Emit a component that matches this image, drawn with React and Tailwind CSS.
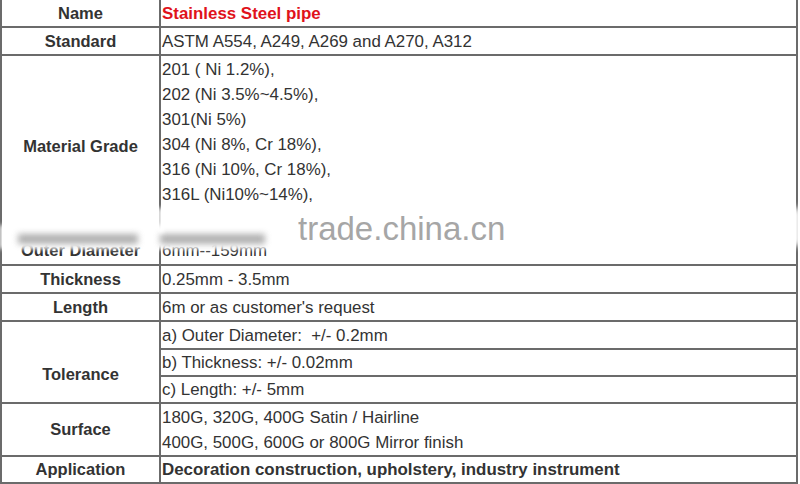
import React from "react";

const L = "flex items-center justify-center font-bold w-[159px] shrink-0 border-r-2 border-[#6b6b6b]";
const V = "flex-1 pl-[1px] text-[16.9px]";

function Row({ h, label, children, bold, red }) {
  return (
    <div className={`flex border-b-2 border-[#6b6b6b] ${h}`}>
      <div className={L}>{label}</div>
      <div className={`${V} flex items-center ${bold ? "font-bold" : ""} ${red ? "text-[#e0121b]" : ""}`}>{children}</div>
    </div>
  );
}

export default function App() {
  const grades = [
    "201 ( Ni 1.2%),",
    "202 (Ni 3.5%~4.5%),",
    "301(Ni 5%)",
    "304 (Ni 8%, Cr 18%),",
    "316 (Ni 10%, Cr 18%),",
    "316L (Ni10%~14%),",
  ];
  return (
    <div className="relative w-[800px] h-[484px] overflow-hidden bg-white text-[#333] text-[16.5px] leading-[25px] font-['Liberation_Sans',Arial,sans-serif]">
      <div className="w-[798px] border-l-2 border-r-2 border-[#6b6b6b]">
        <Row h="h-[28px]" label="Name" bold red>Stainless Steel pipe</Row>
        <Row h="h-[28px]" label="Standard">ASTM A554, A249, A269 and A270, A312</Row>
        <div className="flex border-b-2 border-[#6b6b6b] h-[210px]">
          <div className="w-[159px] shrink-0 border-r-2 border-[#6b6b6b] flex flex-col font-bold">
            <div className="h-[180px] flex items-center justify-center">Material Grade</div>
            <div className="flex-1 flex items-center justify-center">Outer Diameter</div>
          </div>
          <div className={`${V} flex flex-col`}>
            <div className="h-[180px] pt-[1px]">
              {grades.map((g) => (
                <div key={g}>{g}</div>
              ))}
            </div>
            <div className="flex-1 flex items-center">6mm--159mm</div>
          </div>
        </div>
        <Row h="h-[28px]" label="Thickness">0.25mm - 3.5mm</Row>
        <Row h="h-[28px]" label="Length">6m or as customer's request</Row>
        <div className="flex border-b-2 border-[#6b6b6b] h-[82px]">
          <div className={`${L} pt-[24px]`}>Tolerance</div>
          <div className="flex-1 flex flex-col text-[16.9px]">
            <div className="h-[28px] border-b-2 border-[#6b6b6b] flex items-center pl-[1px] whitespace-pre">a) Outer Diameter:  +/- 0.2mm</div>
            <div className="h-[27px] border-b-2 border-[#6b6b6b] flex items-center pl-[1px]">b) Thickness: +/- 0.02mm</div>
            <div className="flex-1 flex items-center pl-[1px]">c) Length: +/- 5mm</div>
          </div>
        </div>
        <div className="flex border-b-2 border-[#6b6b6b] h-[53px]">
          <div className={L}>Surface</div>
          <div className={`${V} pt-[1px]`}>
            <div>180G, 320G, 400G Satin / Hairline</div>
            <div>400G, 500G, 600G or 800G Mirror finish</div>
          </div>
        </div>
        <Row h="h-[27px]" label="Application" bold>Decoration construction, upholstery, industry instrument</Row>
      </div>

      {/* blurred band over outer diameter row */}
      <div className="absolute left-0 top-[225px] w-[300px] h-[24px] bg-white blur-[2px]"></div>
      <div className="absolute left-[18px] top-[234px] w-[120px] h-[10px] bg-[#8f8f8f] opacity-70 blur-[3px]"></div>
      <div className="absolute left-[160px] top-[234px] w-[105px] h-[10px] bg-[#8f8f8f] opacity-70 blur-[3px]"></div>
      <div className="absolute left-[158px] top-[208px] w-[6px] h-[24px] bg-white blur-[2px]"></div>
      <div className="absolute left-[787px] top-[208px] w-[14px] h-[38px] bg-white blur-[3px]"></div>

      {/* watermark */}
      <div className="absolute left-[298px] top-[212px] text-[33px] leading-[33px] text-[#a6a6a6] font-['Liberation_Sans',Arial,sans-serif]">
        trade.china.cn
      </div>
    </div>
  );
}
